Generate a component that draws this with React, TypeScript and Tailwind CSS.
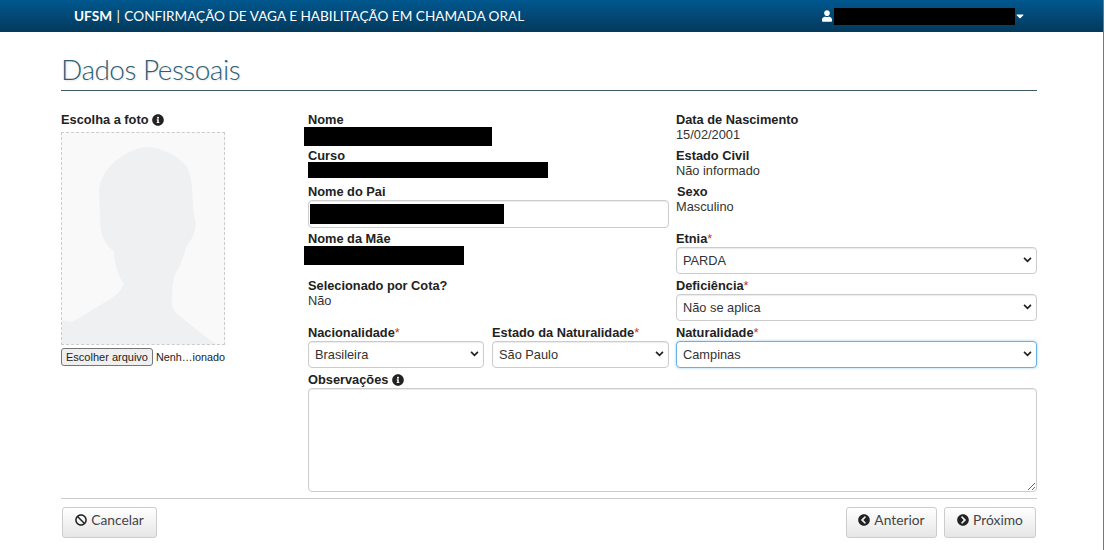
import type React from "react"
import { FaBan, FaCaretDown, FaChevronCircleLeft, FaChevronCircleRight, FaInfoCircle, FaUser } from "react-icons/fa"

const selectBase =
  "h-[27px] w-full appearance-none rounded border bg-white pl-1.5 pr-5 text-[12.8px] text-[#333] outline-none"

function Field({ label, required, children, className = "" }: { label: string; required?: boolean; children?: React.ReactNode; className?: string }) {
  return (
    <div className={className}>
      <div className="h-[15px] text-[12.8px] leading-[15px] font-bold text-[#222]">
        {label}
        {required && <span className="font-normal text-[#c0392b]">*</span>}
      </div>
      {children}
    </div>
  )
}

function Select({ value, focused }: { value: string; focused?: boolean }) {
  return (
    <div className="relative mt-px">
      <select
        defaultValue={value}
        className={`${selectBase} ${
          focused ? "border-[#66afe9] shadow-[0_0_3px_rgba(102,175,233,0.6)]" : "border-[#ccc] shadow-[inset_0_1px_1px_rgba(0,0,0,0.08)]"
        }`}
      >
        <option>{value}</option>
      </select>
      <svg viewBox="0 0 10 7" className="pointer-events-none absolute top-[10px] right-[5px] h-[6px] w-[9px]">
        <path d="M1 1l4 4 4-4" fill="none" stroke="#222" strokeWidth="2" />
      </svg>
    </div>
  )
}

function NavButton({ icon, label, className = "" }: { icon: React.ReactNode; label: string; className?: string }) {
  return (
    <button className={`flex h-[31px] items-center justify-center gap-1 rounded-[3px] border border-[#ccc] bg-gradient-to-b from-white to-[#e6e6e6] pb-[5px] font-['Lato',sans-serif] text-[13.8px] text-[#444] ${className}`}>
      {icon}
      {label}
    </button>
  )
}

export default function App() {
  return (
    <div className="h-[550px] w-[1106px] overflow-hidden bg-white font-['Liberation_Sans',sans-serif] text-[12.8px] text-[#333]">
      {/* Top bar */}
      <header className="flex h-8 items-center bg-gradient-to-b from-[#00588f] to-[#03395c] text-white">
        <div className="w-[760px] pl-[74px] font-['Lato',sans-serif] text-[13.6px] whitespace-nowrap">
          <span className="font-bold">UFSM</span> <span className="mx-px">|</span> CONFIRMAÇÃO DE VAGA E HABILITAÇÃO EM CHAMADA ORAL
        </div>
        <div className="ml-[62px] flex items-center">
          <FaUser className="mr-[2px] h-3 w-[10px]" />
          <div className="h-[17px] w-[181px] bg-black" />
          <FaCaretDown className="-ml-px h-3 w-3" />
        </div>
      </header>

      <main className="ml-[61px] w-[976px]">
        <h1 className="flex h-[59px] items-end border-b border-[#3d5a68] pb-[3px] font-['Lato',sans-serif] text-[28px] leading-[36px] font-light tracking-[-0.5px] text-[#2f5f73] [text-shadow:1px_1px_2px_rgba(0,0,0,0.12)]">
          Dados Pessoais
        </h1>

        <div className="mt-[21px] flex">
          {/* Photo column */}
          <div className="w-[247px] shrink-0">
            <div className="flex h-[15px] items-center gap-1 text-[12.8px] font-bold text-[#222]">
              Escolha a foto <FaInfoCircle className="h-3 w-3" />
            </div>
            <div className="mt-[5px] h-[213px] w-[164px] border border-dashed border-[#ccc] bg-[#f9f9f9]">
              <svg viewBox="0 0 162 211" className="h-full w-full">
                <path
                  d="M85 14C70 15 52 26 43 40C38 48 37 55 37 61C38 75 38 88 39 98C41 108 47 115 52 118C52 130 56 142 62 151C58 160 52 164 45 168C32 175 22 183 12 188C8 189 3 188 0 187V211H154C140 202 127 190 115 181C110 176 109 170 110 164C110 156 111 150 112 144C116 135 122 125 124 114C129 108 133 100 134 91C131 82 131 68 130 54C129 46 128 40 125 34C118 26 110 20 102 18C96 15 90 14 85 14Z"
                  fill="#eff0f2"
                />
              </svg>
            </div>
            <div className="mt-[3px] flex items-center text-[10.8px] text-[#222]">
              <button className="mr-[3px] h-[18px] w-[92px] rounded-[3px] border border-[#767676] bg-[#efefef] text-[11px]">Escolher arquivo</button>
              Nenh…ionado
            </div>
          </div>

          {/* Data fields */}
          <div className="w-[729px]">
            <div className="grid grid-cols-[361px_361px] gap-x-[7px]">
              <Field label="Nome" className="h-9">
                <div className="-ml-1 h-[19px] w-[188px] bg-black" />
              </Field>
              <Field label="Data de Nascimento" className="h-9">
                <div className="pt-px leading-[14px]">15/02/2001</div>
              </Field>

              <Field label="Curso" className="h-9">
                <div className="mt-[-1px] h-[16px] w-[240px] bg-black" />
              </Field>
              <Field label="Estado Civil" className="h-9">
                <div className="pt-px leading-[14px]">Não informado</div>
              </Field>

              <Field label="Nome do Pai" className="h-[47px]">
                <div className="mt-px h-[28px] rounded border border-[#ccc] py-[3px] pl-px shadow-[inset_0_1px_1px_rgba(0,0,0,0.08)]">
                  <div className="h-5 w-[194px] bg-black" />
                </div>
              </Field>
              <Field label="Sexo" className="h-[47px] pl-px">
                <div className="-ml-px pt-px leading-[14px]">Masculino</div>
              </Field>

              <Field label="Nome da Mãe" className="h-[47px]">
                <div className="-ml-1 h-[19px] w-[160px] bg-black" />
              </Field>
              <Field label="Etnia" required className="h-[47px]">
                <Select value="PARDA" />
              </Field>

              <Field label="Selecionado por Cota?" className="h-[47px]">
                <div className="pt-px leading-[14px]">Não</div>
              </Field>
              <Field label="Deficiência" required className="h-[47px]">
                <Select value="Não se aplica" />
              </Field>

              <div className="grid h-[47px] grid-cols-[176px_177px] gap-x-2">
                <Field label="Nacionalidade" required>
                  <Select value="Brasileira" />
                </Field>
                <Field label="Estado da Naturalidade" required>
                  <Select value="São Paulo" />
                </Field>
              </div>
              <Field label="Naturalidade" required className="h-[47px]">
                <Select value="Campinas" focused />
              </Field>
            </div>

            <div className="flex h-[15px] items-center gap-1 text-[12.8px] font-bold text-[#222]">
              Observações <FaInfoCircle className="h-3 w-3" />
            </div>
            <textarea className="mt-px block h-[104px] w-full rounded border border-[#ccc] shadow-[inset_0_1px_1px_rgba(0,0,0,0.08)] outline-none" />
          </div>
        </div>

        {/* Footer actions */}
        <div className="mt-[6px] flex border-t border-[#ccc] pt-2 pr-px pl-px">
          <NavButton icon={<FaBan className="h-3 w-3 text-[#222]" />} label="Cancelar" className="w-[95px]" />
          <NavButton icon={<FaChevronCircleLeft className="h-3 w-3 text-[#222]" />} label="Anterior" className="ml-auto w-[91px]" />
          <NavButton icon={<FaChevronCircleRight className="h-3 w-3 text-[#222]" />} label="Próximo" className="ml-[7px] w-[92px]" />
        </div>
      </main>

      {/* Window edge on the right of the capture */}
      <div className="absolute top-0 right-0 h-[550px] w-[3px] border-l border-l-[#777] bg-white" />
    </div>
  )
}
